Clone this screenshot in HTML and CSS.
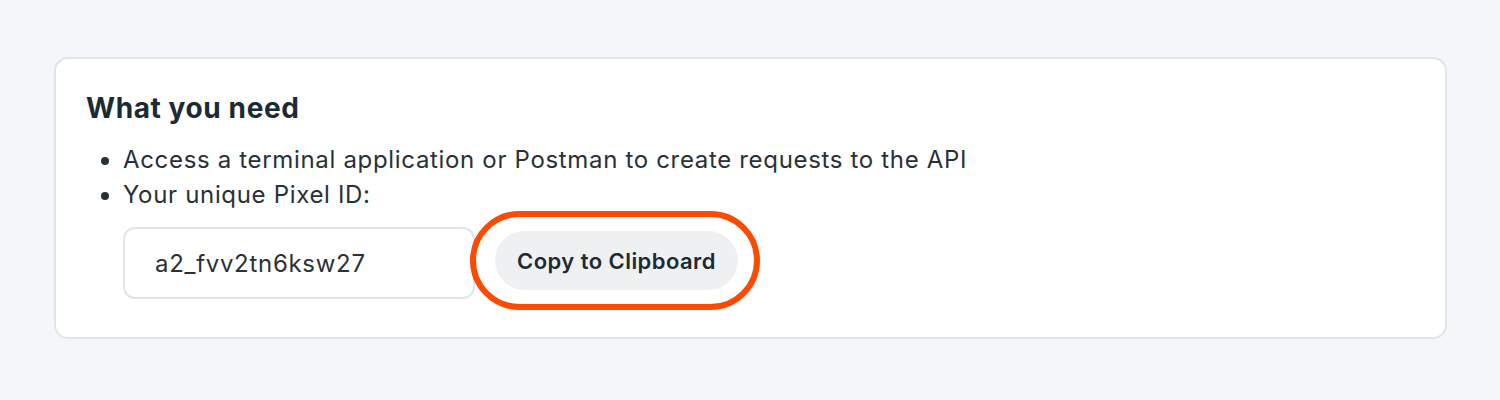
FILE: index.html
```html
<!DOCTYPE html>
<html>
<head>
<meta charset="utf-8">
<link rel="stylesheet" href="styles.css">
</head>
<body>
<div class="page">
  <section class="card">
    <h2 class="title">What you need</h2>
    <ul class="list">
      <li>Access a terminal application or Postman to create requests to the API</li>
      <li>Your unique Pixel ID:</li>
    </ul>
    <div class="id-row">
      <div class="id-box">a2_fvv2tn6ksw27</div>
      <div class="btn-wrap">
        <button class="copy-btn">Copy to Clipboard</button>
        <span class="ring"></span>
      </div>
    </div>
  </section>
</div>
</body>
</html>
```
FILE: styles.css
```css
html, body {
  margin: 0;
  padding: 0;
  background: #f5f6f8;
  font-family: Inter, "Noto Sans", "Liberation Sans", sans-serif;
  color: #1c2b33;
}
.page {
  padding: 57px 53px 0 54px;
}
.card {
  background: #ffffff;
  border: 2px solid #dfe5e8;
  border-radius: 14px;
  height: 282px;
  box-sizing: border-box;
  padding: 32px 30px 0;
}
.title {
  margin: 0;
  font-size: 28px;
  font-weight: 700;
  line-height: 34px;
  letter-spacing: 0.6px;
  color: #1c2b33;
}
.list {
  margin: 17px 0 0;
  padding-left: 37px;
  font-size: 24px;
  line-height: 35px;
  letter-spacing: 0.67px;
  color: #283138;
}
.id-row {
  display: flex;
  align-items: flex-start;
  margin-top: 15px;
  margin-left: 37px;
  gap: 20px;
}
.id-box {
  width: 352px;
  height: 72px;
  box-sizing: border-box;
  border: 2px solid #dfe5e8;
  border-radius: 12px;
  padding: 0 30px;
  display: flex;
  align-items: center;
  font-size: 24px;
  letter-spacing: 0.7px;
  color: #283138;
}
.btn-wrap {
  position: relative;
  margin-top: 4px;
}
.copy-btn {
  display: block;
  width: 243px;
  height: 59px;
  padding: 0;
  border: none;
  border-radius: 30px;
  background: #eef0f2;
  font-family: inherit;
  font-size: 22px;
  font-weight: 600;
  letter-spacing: 0.45px;
  color: #1c2b33;
}
.ring {
  position: absolute;
  left: -25px;
  top: -20px;
  width: 290px;
  height: 99px;
  box-sizing: border-box;
  border: 6px solid #fc4a00;
  border-radius: 50px;
  pointer-events: none;
}
```
